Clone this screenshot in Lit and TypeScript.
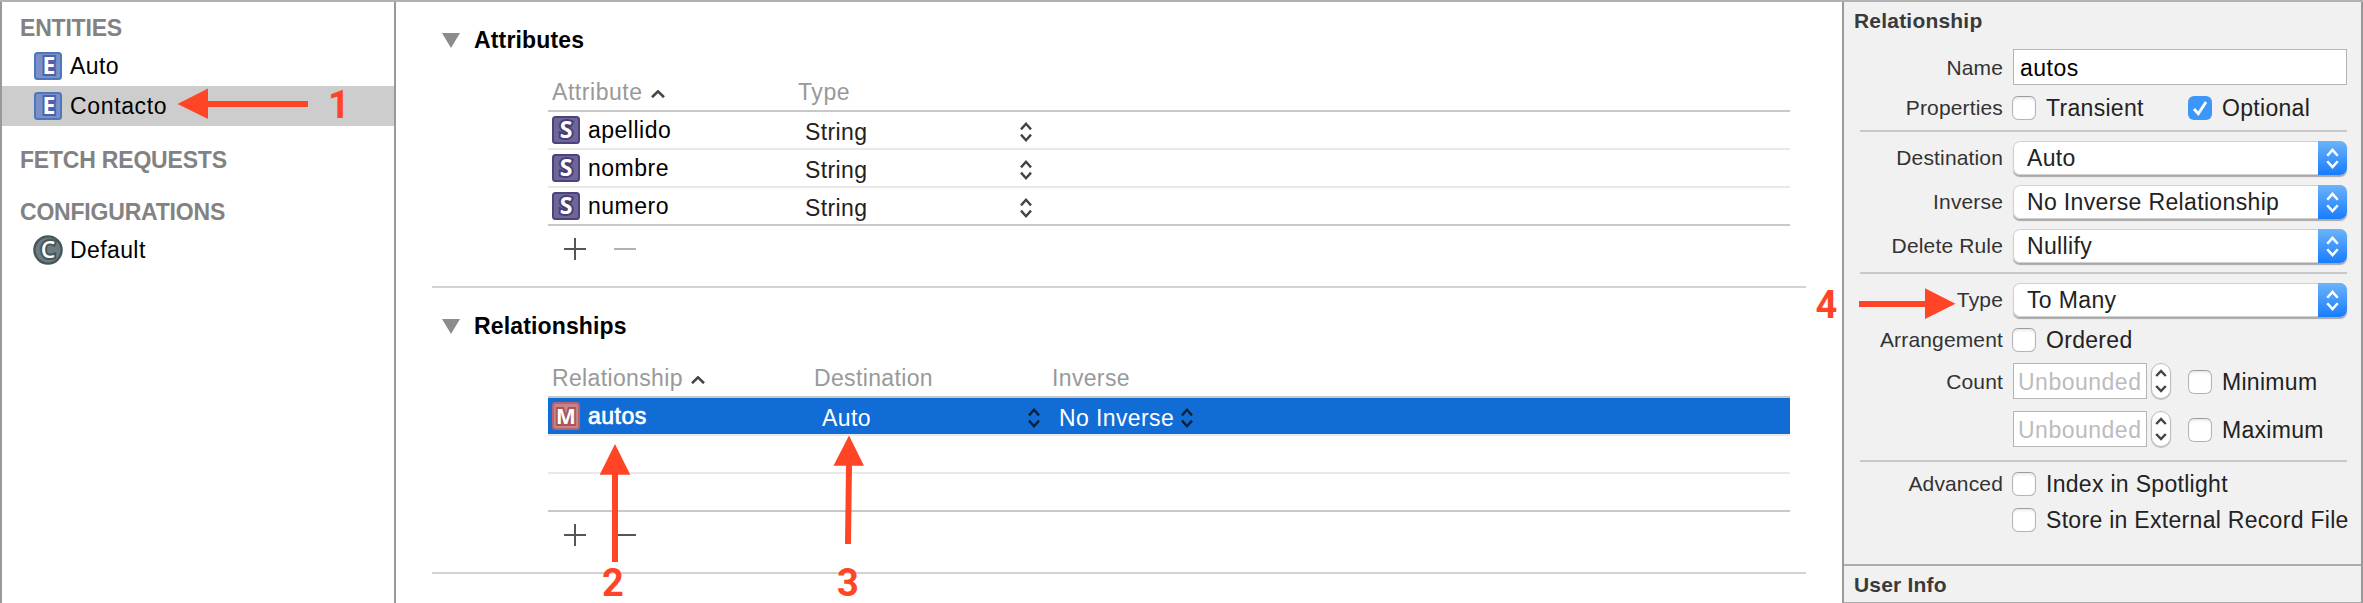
import { LitElement, html, css, svg, nothing } from "lit";
import { customElement } from "lit/decorators.js";
import { classMap } from "lit/directives/class-map.js";

interface Row {
  name?: string;
  values: string[];
  selected?: boolean;
}

const entities = [
  { name: "Auto", selected: false },
  { name: "Contacto", selected: true },
];

const attributes: Row[] = [
  { name: "apellido", values: ["String"] },
  { name: "nombre", values: ["String"] },
  { name: "numero", values: ["String"] },
];

const relationships: Row[] = [
  { name: "autos", values: ["Auto", "No Inverse"], selected: true },
  { values: [] },
  { values: [] },
];

const badge = (letter: string) => {
  const kind = letter.toLowerCase();
  return html`<svg class="badge ${kind}" viewBox="0 0 30 30">
    ${letter === "C"
      ? svg`<circle class="plate" cx="15" cy="15" r="13.6" />`
      : svg`<rect class="plate" x="2" y="2" width="26" height="26" rx="2.5" />`}
    <text class="glyph" x=${letter === "E" ? 16 : 15} y=${letter === "M" ? 22.7 : 23.3}>${letter}</text>
  </svg>`;
};

const upDown = html`<svg class="updown" viewBox="0 0 12 20">
  <path d="M1 7.4 L6 1.8 L11 7.4 M1 12.6 L6 18.2 L11 12.6" />
</svg>`;

const sortCaret = html`<svg class="caret" viewBox="0 0 14 8"><path d="M1 7.2 L7 1.4 L13 7.2" /></svg>`;

@customElement("app-root")
export class AppRoot extends LitElement {
  static styles = css`
    :host {
      display: block;
      position: relative;
      box-sizing: border-box;
      width: 2363px;
      height: 603px;
      overflow: hidden;
      border-top: 2px solid #b1b1b1;
      background: #fff;
      color: #000;
      font: 23px "Liberation Sans", Arial, sans-serif;
      letter-spacing: 0.4px;
      white-space: nowrap;
    }
    .panes {
      display: grid;
      grid-template-columns: 396px 1446px 521px;
      height: 601px;
    }
    .sidebar {
      box-sizing: border-box;
      border-left: 2px solid #999;
      border-right: 2px solid #999;
      padding-top: 8px;
    }
    .group {
      height: 36px;
      line-height: 36px;
      padding-left: 18px;
      font-weight: bold;
      letter-spacing: -0.2px;
      color: #828282;
    }
    .group.spaced {
      margin-top: 16px;
    }
    .item {
      display: flex;
      align-items: center;
      height: 40px;
      padding-left: 31px;
      gap: 7px;
    }
    .item.selected {
      background: #cdcdcd;
      letter-spacing: 0.65px;
    }
    .badge {
      width: 30px;
      height: 30px;
      flex: none;
      overflow: visible;
    }
    .plate {
      stroke-width: 2;
    }
    .glyph {
      font: 600 23px "Open Sans", sans-serif;
      letter-spacing: 0;
      text-anchor: middle;
      fill: #fff;
      stroke-width: 4;
      paint-order: stroke;
    }
    .e .plate { fill: #7b8fc9; stroke: #4c78b9; }
    .e .glyph { stroke: #4e62ac; font-weight: 700; }
    .c .plate { fill: #6b7b80; stroke: #46565b; stroke-width: 2.4; }
    .c .glyph { stroke: #46565b; }
    .s .plate { fill: #6e6598; stroke: #4c427c; }
    .s .glyph { stroke: #4a3f72; font-weight: 700; }
    .m .plate { fill: #cb8388; stroke: #b9636c; }
    .m .glyph { stroke: #a8555c; font-weight: 700; font-size: 21px; }

    .section {
      box-sizing: border-box;
      height: 286px;
      margin: 0 36px;
      padding: 22px 16px 0 0;
      border-bottom: 2px solid #d2d2d2;
    }
    .title {
      display: flex;
      align-items: center;
      height: 32px;
      padding-left: 10px;
      gap: 14px;
      margin-bottom: 18px;
      font-weight: bold;
      letter-spacing: 0.15px;
    }
    .disclosure {
      width: 18px;
      height: 15px;
      fill: #8c8c8c;
    }
    .table {
      margin-left: 116px;
    }
    .row, .head {
      display: grid;
      grid-template-columns: 250px 245px 1fr;
      align-items: center;
      height: 36px;
      border-bottom: 2px solid #e9e9e9;
    }
    .rel .row, .rel .head {
      grid-template-columns: 265px 238px 153px 1fr;
    }
    .head {
      border-color: #c8c8c8;
      color: #999;
      letter-spacing: 0.55px;
    }
    .rel .head div + div {
      padding-left: 1px;
    }
    .rel .head {
      letter-spacing: 0.35px;
    }
    .row:last-of-type {
      border-color: #c8c8c8;
    }
    .row.selected {
      background: #126cd6;
      background-clip: padding-box;
      color: #fff;
    }
    .first {
      display: flex;
      align-items: center;
      padding-left: 4px;
    }
    .row .first {
      padding-left: 3px;
      gap: 7px;
      letter-spacing: 0.5px;
    }
    .row.selected .name {
      -webkit-text-stroke: 0.7px #fff;
    }
    .value {
      display: flex;
      justify-content: space-between;
      align-items: center;
      padding: 4px 11px 0 7px;
      color: #222;
    }
    .selected .value {
      padding-left: 9px;
      color: #fff;
    }
    .selected .value + .value {
      padding-left: 8px;
    }
    .updown {
      width: 12px;
      height: 20px;
      fill: none;
      stroke: #444;
      stroke-width: 2.4;
      overflow: visible;
    }
    .selected .updown {
      stroke: #0b203c;
    }
    .caret {
      width: 14px;
      height: 8px;
      margin: 4px 0 0 8px;
      fill: none;
      stroke: #444;
      stroke-width: 2.6;
    }
    .actions {
      display: flex;
      align-items: center;
      height: 46px;
      padding-left: 16px;
      gap: 28px;
    }
    .actions svg {
      width: 22px;
      height: 22px;
      stroke: #555;
      stroke-width: 2;
    }
    .actions .disabled {
      stroke: #b3b3b3;
    }

    .inspector {
      box-sizing: border-box;
      border-left: 2px solid #999;
      border-right: 2px solid #999;
      background: #f1f1f1;
      color: #222;
    }
    .heading {
      height: 36px;
      line-height: 37px;
      padding-left: 10px;
      font-size: 21px;
      font-weight: bold;
      letter-spacing: 0.2px;
      color: #3a3a3a;
    }
    .form {
      height: 526px;
      padding: 11px 14px 0 16px;
      box-sizing: border-box;
    }
    .field {
      display: grid;
      grid-template-columns: 143px 1fr;
      column-gap: 10px;
      align-items: center;
      height: 34px;
      margin-bottom: 10px;
    }
    .field.text { height: 36px; margin-bottom: 11px; }
    .field.count { height: 36px; margin-bottom: 12px; }
    .field.check { height: 24px; margin-bottom: 10px; }
    .field.arrangement { margin: 11px 0; }
    .field.store { margin-top: 12px; }
    .label {
      text-align: right;
      line-height: 24px;
      font-size: 21px;
      letter-spacing: 0.15px;
      color: #333;
    }
    .text .label, .count .label, .count .choice {
      padding-top: 2px;
    }
    .rule {
      height: 2px;
      margin-bottom: 9px;
      background: #c9c9c9;
    }
    .rule.raised {
      margin-top: -1px;
    }
    .rule.lowered {
      margin-top: 13px;
      margin-bottom: 10px;
    }
    .controls {
      display: flex;
      align-items: center;
    }
    .input {
      box-sizing: border-box;
      height: 36px;
      line-height: 34px;
      padding: 1px 5px 0 6px;
      border: 1.5px solid #b5b5b5;
      background: #fff;
      letter-spacing: 0.5px;
      flex: 1;
      color: #000;
    }
    .input.small {
      flex: none;
      width: 134px;
      padding-left: 4px;
      color: #bcbcbc;
    }
    .choice {
      display: flex;
      align-items: center;
      gap: 10px;
      margin-left: -1px;
      width: 177px;
      line-height: 24px;
      letter-spacing: 0.3px;
    }
    .count .choice {
      margin-left: 17px;
    }
    .box {
      box-sizing: border-box;
      flex: none;
      width: 24px;
      height: 24px;
      border: 1.5px solid #b4b4b4;
      border-top-color: #9d9d9d;
      border-radius: 6px;
      background: #fff;
      box-shadow: inset 0 2px 2px #ececec;
    }
    .box.on {
      border: 0;
      background: #3d97f8;
      box-shadow: none;
    }
    .box svg {
      display: block;
      fill: none;
      stroke: #fff;
      stroke-width: 2.8;
    }
    .stepper {
      box-sizing: border-box;
      display: flex;
      justify-content: center;
      align-items: center;
      width: 20px;
      height: 36px;
      margin-left: 4px;
      border: 1px solid #bdbdbd;
      border-radius: 10px;
      background: #fff;
      box-shadow: 0 1px 1px #bbb;
    }
    .stepper svg {
      width: 12px;
      height: 24px;
      fill: none;
      stroke: #444;
      stroke-width: 2.5;
    }
    .popup {
      box-sizing: border-box;
      display: flex;
      flex: 1;
      justify-content: space-between;
      height: 34px;
      line-height: 34px;
      padding-left: 14px;
      border-radius: 7px;
      background: #fff;
      box-shadow: inset 0 0 0 1px #d2d2d2, 0 1.5px 1px #a8a8a8;
      letter-spacing: 0.35px;
      overflow: hidden;
    }
    .knob {
      display: flex;
      justify-content: center;
      align-items: center;
      width: 29px;
      background: linear-gradient(#6cb3fa, #187dfd);
    }
    .knob .updown {
      stroke: #fff;
      width: 13px;
      height: 21px;
    }
    .footer {
      height: 36px;
      border-top: 2px solid #acacac;
      border-bottom: 2px solid #acacac;
    }

    .notes {
      position: absolute;
      left: 0;
      top: -2px;
      width: 2363px;
      height: 603px;
      fill: #ff4526;
      font: bold 38px Roboto, sans-serif;
      letter-spacing: 0;
      text-anchor: middle;
      overflow: visible;
    }
  `;

  private section(
    title: string,
    letter: string,
    heads: string[],
    rows: Row[],
    removable: boolean,
    kind: string
  ) {
    return html`<section class="section ${kind}">
      <div class="title">
        <svg class="disclosure" viewBox="0 0 18 15"><path d="M0 0 H18 L9 15 Z" /></svg>
        ${title}
      </div>
      <div class="table">
        <header class="head">
          ${heads.map((h, i) =>
            i === 0 ? html`<div class="first">${h}${sortCaret}</div>` : html`<div>${h}</div>`
          )}
        </header>
        ${rows.map(
          (r) => html`<div class=${classMap({ row: true, selected: !!r.selected })}>
            ${r.name
              ? html`<div class="first">${badge(letter)}<span class="name">${r.name}</span></div>`
              : nothing}
            ${r.values.map((v) => html`<div class="value">${v}${upDown}</div>`)}
          </div>`
        )}
        <footer class="actions">
          <svg viewBox="0 0 22 22"><path d="M0 11 H22 M11 0 V22" /></svg>
          <svg class=${classMap({ disabled: !removable })} viewBox="0 0 22 22"><path d="M0 11 H22" /></svg>
        </footer>
      </div>
    </section>`;
  }

  private choice(label: string, on = false) {
    return html`<div class="choice">
      <span class="box ${on ? "on" : ""}">
        ${on ? html`<svg viewBox="0 0 24 24"><path d="M6 13 L10.3 17.8 L18 6" /></svg>` : nothing}
      </span>
      <span>${label}</span>
    </div>`;
  }

  private popup(label: string, value: string) {
    return html`<div class="field">
      <div class="label">${label}</div>
      <div class="controls">
        <div class="popup">${value}<span class="knob">${upDown}</span></div>
      </div>
    </div>`;
  }

  private count(label: string, limit: string) {
    return html`<div class="field count">
      <div class="label">${label}</div>
      <div class="controls">
        <div class="input small">Unbounded</div>
        <span class="stepper">
          <svg viewBox="0 0 12 24"><path d="M1.2 7 L6 2 L10.8 7 M1.2 17 L6 22 L10.8 17" /></svg>
        </span>
        ${this.choice(limit)}
      </div>
    </div>`;
  }

  render() {
    return html`
      <div class="panes">
        <nav class="sidebar">
          <div class="group">ENTITIES</div>
          ${entities.map(
            (e) => html`<div class=${classMap({ item: true, selected: e.selected })}>
              ${badge("E")}<span>${e.name}</span>
            </div>`
          )}
          <div class="group spaced">FETCH REQUESTS</div>
          <div class="group spaced">CONFIGURATIONS</div>
          <div class="item">${badge("C")}<span>Default</span></div>
        </nav>

        <main>
          ${this.section("Attributes", "S", ["Attribute", "Type"], attributes, false, "attr")}
          ${this.section(
            "Relationships",
            "M",
            ["Relationship", "Destination", "Inverse"],
            relationships,
            true,
            "rel"
          )}
        </main>

        <aside class="inspector">
          <div class="heading">Relationship</div>
          <div class="form">
            <div class="field text">
              <div class="label">Name</div>
              <div class="controls"><div class="input">autos</div></div>
            </div>
            <div class="field check">
              <div class="label">Properties</div>
              <div class="controls">${this.choice("Transient")}${this.choice("Optional", true)}</div>
            </div>
            <div class="rule"></div>
            ${this.popup("Destination", "Auto")} ${this.popup("Inverse", "No Inverse Relationship")}
            ${this.popup("Delete Rule", "Nullify")}
            <div class="rule raised"></div>
            ${this.popup("Type", "To Many")}
            <div class="field check arrangement">
              <div class="label">Arrangement</div>
              <div class="controls">${this.choice("Ordered")}</div>
            </div>
            ${this.count("Count", "Minimum")} ${this.count("", "Maximum")}
            <div class="rule lowered"></div>
            <div class="field check">
              <div class="label">Advanced</div>
              <div class="controls">${this.choice("Index in Spotlight")}</div>
            </div>
            <div class="field check store">
              <div></div>
              <div class="controls">${this.choice("Store in External Record File")}</div>
            </div>
          </div>
          <div class="footer"><div class="heading">User Info</div></div>
        </aside>
      </div>

      <svg class="notes" viewBox="0 0 2363 603">
        <path d="M177.500 104 L208 88.500 V101 H308 V107 H208 V119 Z" />
        <text x="339" y="118">1</text>
        <path d="M615 444 L630.300 474.700 H618 V562 H612 V474.700 H599.700 Z" />
        <text x="613" y="596">2</text>
        <path d="M849 435.500 L864 465.700 H852 L851 544 H845 L846 465.700 H833.500 Z" />
        <text x="848" y="596">3</text>
        <path d="M1955.500 303.700 L1925 319 V307 H1859 V301 H1925 V288.300 Z" />
        <text x="1826.500" y="318">4</text>
      </svg>
    `;
  }
}
